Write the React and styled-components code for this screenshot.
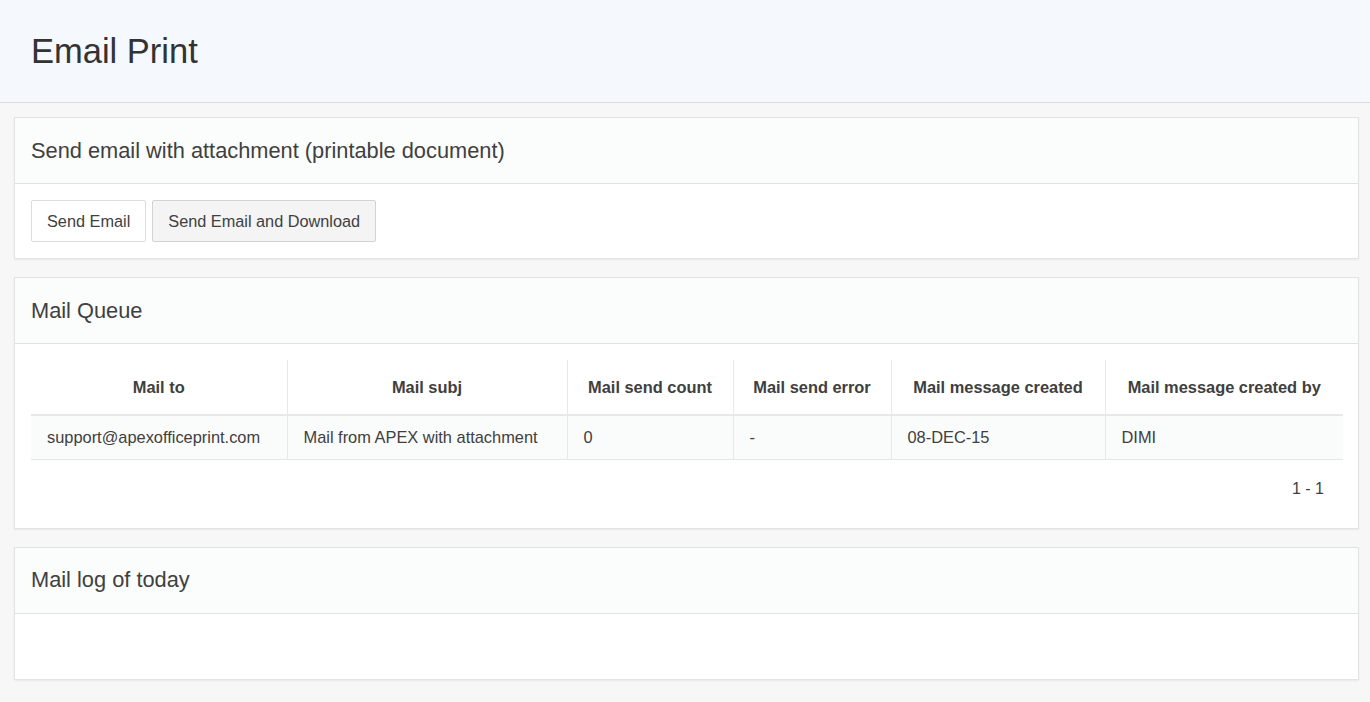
import React from "react";
import styled, { createGlobalStyle } from "styled-components";

const Global = createGlobalStyle`
  html, body { margin: 0; padding: 0; background: #f7f7f7; }
  body { font-family: "Liberation Sans", Arial, sans-serif; color: #404040; }
  * { box-sizing: border-box; }
`;

const Page = styled.div`
  min-height: 702px;
  background: #f7f7f7;
`;

const TitleBar = styled.header`
  height: 103px;
  background: #f5f8fd;
  border-bottom: 1px solid #d9dbde;
  display: flex;
  align-items: center;
  padding: 0 31px;
`;

const PageTitle = styled.h1`
  margin: 0;
  font-weight: 400;
  font-size: 34.5px;
  color: #333;
  padding-top: 1px;
`;

const Content = styled.main`
  padding: 14px 11px 0 14px;
  display: flex;
  flex-direction: column;
  gap: 18px;
`;

const Card = styled.section`
  background: #fff;
  border: 1px solid #e3e3e3;
  box-shadow: 0 1px 2px rgba(0, 0, 0, 0.06);
`;

const CardHeader = styled.div`
  height: 66px;
  background: #fbfcfc;
  border-bottom: 1px solid #e2e2e2;
  display: flex;
  align-items: center;
  padding: 0 16px;
`;

const CardTitle = styled.h2`
  margin: 0;
  font-weight: 400;
  font-size: 21.8px;
  color: #404040;
`;

const CardBody = styled.div`
  padding: ${(p) => p.$pad || "16px"};
  min-height: ${(p) => p.$minH || "0"};
`;

const ButtonRow = styled.div`
  display: flex;
  gap: 6px;
`;

const Button = styled.button`
  height: 42px;
  padding: 0 15px;
  font-family: inherit;
  font-size: 16.3px;
  color: #404040;
  background: ${(p) => (p.$alt ? "#f4f4f4" : "#fff")};
  border: 1px solid ${(p) => (p.$alt ? "#d3d3d3" : "#dcdcdc")};
  border-radius: 2px;
`;

const Table = styled.table`
  width: 100%;
  border-collapse: collapse;
  font-size: 16.4px;
`;

const Th = styled.th`
  height: 55px;
  font-weight: 700;
  text-align: center;
  color: #404040;
  border-bottom: 2px solid #e8e8e8;
  border-left: 1px solid #e8e8e8;
  padding: 0 6px;
  &:first-child { border-left: none; }
`;

const Td = styled.td`
  height: 44px;
  background: #fafbfb;
  border-bottom: 1px solid #e6e6e6;
  border-left: 1px solid #e8e8e8;
  padding: 0 16px;
  &:first-child { border-left: none; }
`;

const Pager = styled.div`
  text-align: right;
  padding: 20px 19px 0 0;
  font-size: 16px;
  color: #404040;
  height: 68px;
`;

const columns = [
  { label: "Mail to", w: 256 },
  { label: "Mail subj", w: 280 },
  { label: "Mail send count", w: 166 },
  { label: "Mail send error", w: 158 },
  { label: "Mail message created", w: 214 },
  { label: "Mail message created by" },
];

const rows = [
  [
    "support@apexofficeprint.com",
    "Mail from APEX with attachment",
    "0",
    "-",
    "08-DEC-15",
    "DIMI",
  ],
];

export default function App() {
  return (
    <Page>
      <Global />
      <TitleBar>
        <PageTitle>Email Print</PageTitle>
      </TitleBar>
      <Content>
        <Card>
          <CardHeader>
            <CardTitle>Send email with attachment (printable document)</CardTitle>
          </CardHeader>
          <CardBody>
            <ButtonRow>
              <Button>Send Email</Button>
              <Button $alt>Send Email and Download</Button>
            </ButtonRow>
          </CardBody>
        </Card>
        <Card>
          <CardHeader>
            <CardTitle>Mail Queue</CardTitle>
          </CardHeader>
          <CardBody $pad="16px 15px 0 16px">
            <Table>
              <colgroup>
                {columns.map((c) => (
                  <col key={c.label} style={c.w ? { width: c.w } : undefined} />
                ))}
              </colgroup>
              <thead>
                <tr>
                  {columns.map((c) => (
                    <Th key={c.label}>{c.label}</Th>
                  ))}
                </tr>
              </thead>
              <tbody>
                {rows.map((r, i) => (
                  <tr key={i}>
                    {r.map((v, j) => (
                      <Td key={j}>{v}</Td>
                    ))}
                  </tr>
                ))}
              </tbody>
            </Table>
            <Pager>1 - 1</Pager>
          </CardBody>
        </Card>
        <Card>
          <CardHeader>
            <CardTitle>Mail log of today</CardTitle>
          </CardHeader>
          <CardBody $minH="65px" />
        </Card>
      </Content>
    </Page>
  );
}
